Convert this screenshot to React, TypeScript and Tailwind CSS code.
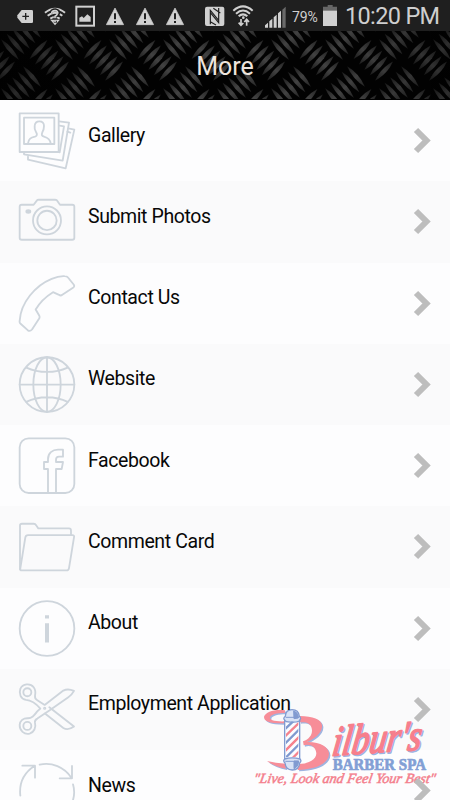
import React from "react";

type Item = { label: string; box: string; art: React.ReactNode };

const items: Item[] = [
  {
    label: "Gallery",
    box: "51 30 180 180",
    art: (
      <>
        <path d="M59 40H176V156H59ZM72 53H163V132H72Z" />
        <path d="M84 130C86 116 92 113 105 110C112 108 112 102 108 96C104 90 103 84 104 77C105 68 110 64 118 64C127 64 132 70 132 78C132 86 130 92 127 97C124 104 125 108 132 110C145 114 150 118 152 130" />
        <path d="M177 64L207 68L188 182L72 163V158M179 77L192 79L179 157" />
        <path d="M205 85L223 89L197 205L84 179V170M202 95L211 98" />
      </>
    ),
  },
  {
    label: "Submit Photos",
    box: "51 273.75 180 180",
    art: (
      <>
        <path d="M65 315H101L111 302Q112 300 116 300H165Q169 300 171 302L180 315H217Q223 315 223 321V414Q223 420 217 420H65Q59 420 59 414V321Q59 315 65 315Z" />
        <circle cx="141" cy="362" r="42" />
        <circle cx="141" cy="362" r="29" />
        <ellipse cx="85" cy="335" rx="6" ry="4" fill="#ced5dc" />
      </>
    ),
  },
  {
    label: "Contact Us",
    box: "51 37.5 180 180",
    art: (
      <path d="M155 55Q176 46 194 47Q201 47 204 51L221 72Q225 78 219 82L187 103Q182 107 177 103L159 95C138 108 119 126 107 147L118 166Q120 170 117 175L96 207Q90 214 83 209L61 189Q58 187 59 181C62 126 106 75 155 55Z" />
    ),
  },
  {
    label: "Website",
    box: "51 281.25 180 180",
    art: (
      <>
        <circle cx="141" cy="373" r="82" />
        <ellipse cx="141" cy="373" rx="41" ry="82" />
        <path d="M141 291V455M59 373H223M79 322Q107 335 141 335T203 322M79 425Q107 411 141 411T203 425" />
      </>
    ),
  },
  {
    label: "Facebook",
    box: "51 30 180 180",
    art: (
      <>
        <rect x="59" y="40" width="164" height="164" rx="27" />
        <path d="M144 203V132H132V111H144V102C144 84 157 74 174 74H189V95H177Q168 95 168 104V111H189L185 132H168V203" />
      </>
    ),
  },
  {
    label: "Comment Card",
    box: "51 273.75 180 180",
    art: (
      <>
        <path d="M60 434V302Q60 297 66 297H101Q106 297 109 302L115 311H207Q213 311 213 318V330" />
        <path d="M84 331H217Q224 331 222 338L207 430Q206 437 200 437H65Q60 437 61 431L76 338Q77 331 84 331Z" />
      </>
    ),
  },
  {
    label: "About",
    box: "51 37.5 180 180",
    art: (
      <>
        <circle cx="141" cy="129" r="82" />
        <path d="M135 89H147V99H135ZM135 113H147V171H135Z" fill="#ced5dc" stroke="none" />
      </>
    ),
  },
  {
    label: "Employment Application",
    box: "51 281.25 180 180",
    art: (
      <>
        <circle cx="82" cy="321" r="12" />
        <circle cx="82" cy="422" r="12" />
        <path d="M78 344C62 342 56 325 61 311C68 295 91 293 101 306C107 314 107 323 105 332Q104 341 112 345L134 359L190 316Q204 309 222 317Q215 330 205 336L148 376L112 400Q103 405 105 413C109 427 102 441 89 445C73 449 58 436 59 419C60 406 70 399 82 399C96 400 103 390 112 378L121 370C108 355 96 345 78 344Z" />
        <path d="M148 366L222 424Q204 437 190 428L135 385" />
        <circle cx="134" cy="369" r="2" />
      </>
    ),
  },
  {
    label: "News",
    box: "51 525 180 180",
    art: (
      <path d="M61 632C57 595 71 564 103 543M67 542H105V578M119 539C155 530 193 547 214 578M216 543V580H179M219 598C232 643 205 690 165 702" />
    ),
  },
];

const steps = [0, 1, 2, 3, 4];
const wraps = [-98, -49, 0, 49].flatMap((y) => [-54, 0, 54].map((x) => [x, y]));

function Tread() {
  return (
    <svg className="absolute inset-0 h-full w-full" viewBox="0 31 450 69">
      <defs>
        <linearGradient id="rib" x1="0" y1="0" x2="1" y2="0">
          <stop offset="0" stopColor="#1c1c1c" />
          <stop offset="0.5" stopColor="#424242" />
          <stop offset="1" stopColor="#242424" />
        </linearGradient>
        <linearGradient id="shade" x1="0" x2="1">
          <stop offset="0" stopColor="#000" stopOpacity=".4" />
          <stop offset=".35" stopColor="#000" stopOpacity="0" />
          <stop offset=".75" stopColor="#000" stopOpacity="0" />
          <stop offset="1" stopColor="#000" stopOpacity=".3" />
        </linearGradient>
        <pattern id="tread" width="54" height="49" patternUnits="userSpaceOnUse">
          {wraps.map(([wx, wy], k) => (
            <g key={k} fill="url(#rib)">
              {steps.map((i) => (
                <path
                  key={"s" + i}
                  transform={`translate(${38.5 + 5.4 * i + wx} ${49.5 + 5.4 * i + wy}) rotate(-47)`}
                  d="M-13 0Q0 -4.6 13 0Q0 4.6 -13 0Z"
                />
              ))}
              {steps.map((i) => (
                <path
                  key={"b" + i}
                  transform={`translate(${32 - 5.5 * i + wx} ${76.5 + 5.5 * i + wy}) rotate(49)`}
                  d="M-13.5 0Q0 -4.4 13.5 0Q0 4.4 -13.5 0Z"
                />
              ))}
            </g>
          ))}
        </pattern>
      </defs>
      <rect y="31" width="450" height="69" fill="#020202" />
      <rect y="31" width="450" height="68" fill="url(#tread)" />
      <rect y="31" width="450" height="69" fill="url(#shade)" />
    </svg>
  );
}

function Warning({ className }: { className: string }) {
  return (
    <svg className={className} width="18" height="31" viewBox="318 0 54 93">
      <path d="M345 24L371 74H319Z" fill="#d0d0d0" stroke="#d0d0d0" strokeWidth="2" strokeLinejoin="round" />
      <path d="M345 40V58M345 63V69" stroke="#1f1f1f" strokeWidth="6" />
    </svg>
  );
}

function StatusBar() {
  return (
    <div className="flex h-[31px] shrink-0 items-start bg-[#1f1f1f] text-[#cfcfcf]">
      <svg className="ml-[17px]" width="16" height="31" viewBox="51 0 48 93">
        <path d="M65 30H95Q99 30 99 34V65Q99 69 95 69H65L52 53V46Z" fill="#d0d0d0" />
        <path d="M67 49H87M77 39V59" stroke="#1f1f1f" strokeWidth="4" />
      </svg>
      <svg className="ml-[11px]" width="22" height="31" viewBox="132 0 66 93">
        <g fill="none" stroke="#d0d0d0" strokeWidth="6">
          <path d="M135 38Q165 14 195 38M143 47Q165 30 187 47M151 56Q165 46 179 56" />
          <path d="M157 62L165 71L173 62Z" fill="#d0d0d0" />
        </g>
        <path d="M153 39Q154 29 166 29Q178 31 176 40Q174 47 166 50V55M166 62V68" fill="none" stroke="#1f1f1f" strokeWidth="9" />
        <path d="M155 39Q156 32 165 32Q175 33 173 40Q171 46 165 49V55M165 61V67" fill="none" stroke="#d0d0d0" strokeWidth="5" />
      </svg>
      <svg className="ml-[9px]" width="20" height="31" viewBox="225 0 60 93">
        <rect x="229" y="20" width="53" height="57" fill="none" stroke="#d0d0d0" strokeWidth="6" />
        <path d="M238 65V53L246 49L251 54L262 43L272 51V65Z" fill="#d0d0d0" />
      </svg>
      <Warning className="ml-[11px]" />
      <Warning className="ml-[12px]" />
      <Warning className="ml-[12px]" />
      <svg className="ml-[20px]" width="21" height="31" viewBox="612 0 63 93">
        <rect x="615" y="20" width="58" height="58" rx="6" fill="#d0d0d0" />
        <path d="M631 73V31L656 61V39M640 25L661 39M656 24V68L631 38M631 65L648 75" fill="none" stroke="#1f1f1f" strokeWidth="3.5" />
      </svg>
      <svg className="ml-[7px]" width="22" height="31" viewBox="21 0 66 93">
        <g fill="none" stroke="#d0d0d0" strokeWidth="6">
          <path d="M25 32Q54 6 83 32M33 41Q54 22 75 41M41 49Q54 37 67 49" />
          <path d="M48 57V75M41 68L48 76L55 69M65 77V59M58 66L65 58L72 66" strokeWidth="5" />
        </g>
        <circle cx="55" cy="53" r="4" fill="#d0d0d0" />
      </svg>
      <svg className="ml-[10px]" width="22" height="31" viewBox="117 0 66 93">
        <path d="M120 83V76L129 68V83ZM133 83V64L142 56V83ZM146 83V52L155 44V83ZM159 83V40L168 32V83Z" fill="#d0d0d0" />
        <path d="M172 83V29L182 20V83Z" fill="#6a6a6a" />
      </svg>
      <span className="ml-[6px] w-[27px] pt-[8px] text-[14px] leading-[18px] tracking-[-0.1px] whitespace-nowrap">79%</span>
      <svg className="ml-[4px]" width="14" height="31" viewBox="294 0 42 93">
        <path d="M308 15H323V20H336V34H294V20H308Z" fill="#666" />
        <path d="M294 32H336V78H294Z" fill="#d0d0d0" />
      </svg>
      <span className="ml-[8px] pt-[2px] text-[23.5px] leading-[28px] tracking-[-0.65px] whitespace-nowrap">10:20 PM</span>
    </div>
  );
}

function Logo() {
  return (
    <svg className="absolute right-0 bottom-0 z-0" width="205" height="110" viewBox="0 0 615 330">
      {["#9fb4e0", "#f78d98"].map((c, i) => (
        <g key={c} transform={i ? undefined : "translate(4 4)"} fill={c}>
          <path d="M120 61C90 57 62 65 57 80C56 94 76 101 120 100V94C88 95 72 90 75 82C77 73 96 69 120 69Z" />
          <path d="M164 78C204 79 229 87 231 106C233 130 205 147 186 156C226 155 253 171 252 193C249 224 207 238 158 240L162 222C192 221 214 209 214 190C213 170 195 160 176 166L174 154C196 147 204 130 200 115C197 99 184 95 164 97Z" />
          <path d="M66 213Q92 219 122 221V236Q88 230 66 213Z" />
        </g>
      ))}
      <g>
        <path d="M119 90H164V207H119Z" fill="#fbfcff" stroke="#819bd1" strokeWidth="4" />
        <clipPath id="pole">
          <path d="M123 96H160V202H123Z" />
        </clipPath>
        <g clipPath="url(#pole)" strokeWidth="7">
          <path d="M112 125L170 70M112 169L170 111M112 213L170 155" stroke="#7f99cf" />
          <path d="M112 147L170 91M112 191L170 133M112 235L170 177" stroke="#f5838e" />
        </g>
        <path d="M119 90Q113 85 121 79Q122 59 141 59Q161 59 163 79Q170 85 164 90Q163 97 141 96Q121 97 119 90ZM119 207Q141 200 165 207Q171 213 164 219Q162 240 142 240Q122 239 120 219Q113 213 119 207Z" fill="#d9e3f6" stroke="#819bd1" strokeWidth="4" />
        <path d="M146 63Q160 67 160 84L147 86ZM147 213H161Q160 231 147 236ZM122 82H162M121 214H162" fill="#819bd1" stroke="#819bd1" strokeWidth="3" />
      </g>
      <g fontFamily="Liberation Serif, serif" fontStyle="italic">
        <g transform="translate(258 197) rotate(-4) skewX(-12)" fontSize="128" strokeWidth="5" strokeLinejoin="round">
          <text x="4" y="4" textLength="268" lengthAdjust="spacingAndGlyphs" fill="#9db3e1" stroke="#9db3e1">ilbur's</text>
          <text textLength="268" lengthAdjust="spacingAndGlyphs" fill="#f77f8c" stroke="#f77f8c">ilbur's</text>
        </g>
        <text transform="translate(24 280) skewX(-10)" fontSize="42" textLength="546" lengthAdjust="spacingAndGlyphs" fill="#f47f8d" stroke="#f47f8d" strokeWidth="1.5">"Live, Look and Feel Your Best"</text>
      </g>
      <text x="263" y="240" fontFamily="Liberation Serif, serif" fontWeight="700" fontSize="47" textLength="280" lengthAdjust="spacingAndGlyphs" fill="#829fd5" stroke="#829fd5" strokeWidth="2">BARBER SPA</text>
    </svg>
  );
}

export default function App() {
  return (
    <div className="relative flex h-[800px] w-[450px] flex-col overflow-hidden bg-[#fdfdfe] font-['Roboto',sans-serif]">
      <StatusBar />
      <header className="relative flex h-[69px] shrink-0 items-center justify-center">
        <Tread />
        <h1 className="relative pt-[3px] text-[25px] leading-[30px] text-[#eee4dd]">More</h1>
      </header>
      <ul className="shrink-0">
        {items.map((item) => (
          <li key={item.label} className="h-[81.25px] odd:bg-[#fdfdfe] even:bg-[#fafafb]">
            <div className="relative z-10 flex h-full items-start">
              <svg
                className="mt-[10px] ml-[17px] h-[60px] w-[60px] shrink-0"
                viewBox={item.box}
                fill="none"
                stroke="#ced5dc"
                strokeWidth="5.5"
                strokeLinejoin="round"
                strokeLinecap="round"
              >
                {item.art}
              </svg>
              <span className="mt-[23.5px] ml-[11px] grow text-[19.5px] leading-6 tracking-[-0.4px] whitespace-nowrap text-[#080808]">{item.label}</span>
              <svg className="mt-[27px] mr-[18px] shrink-0" width="19" height="27" viewBox="0 0 19 27" fill="none" stroke="#bdbdbd" strokeWidth="6">
                <path d="M3 3L13.5 13.5L3 24" />
              </svg>
            </div>
          </li>
        ))}
      </ul>
      <Logo />
    </div>
  );
}
